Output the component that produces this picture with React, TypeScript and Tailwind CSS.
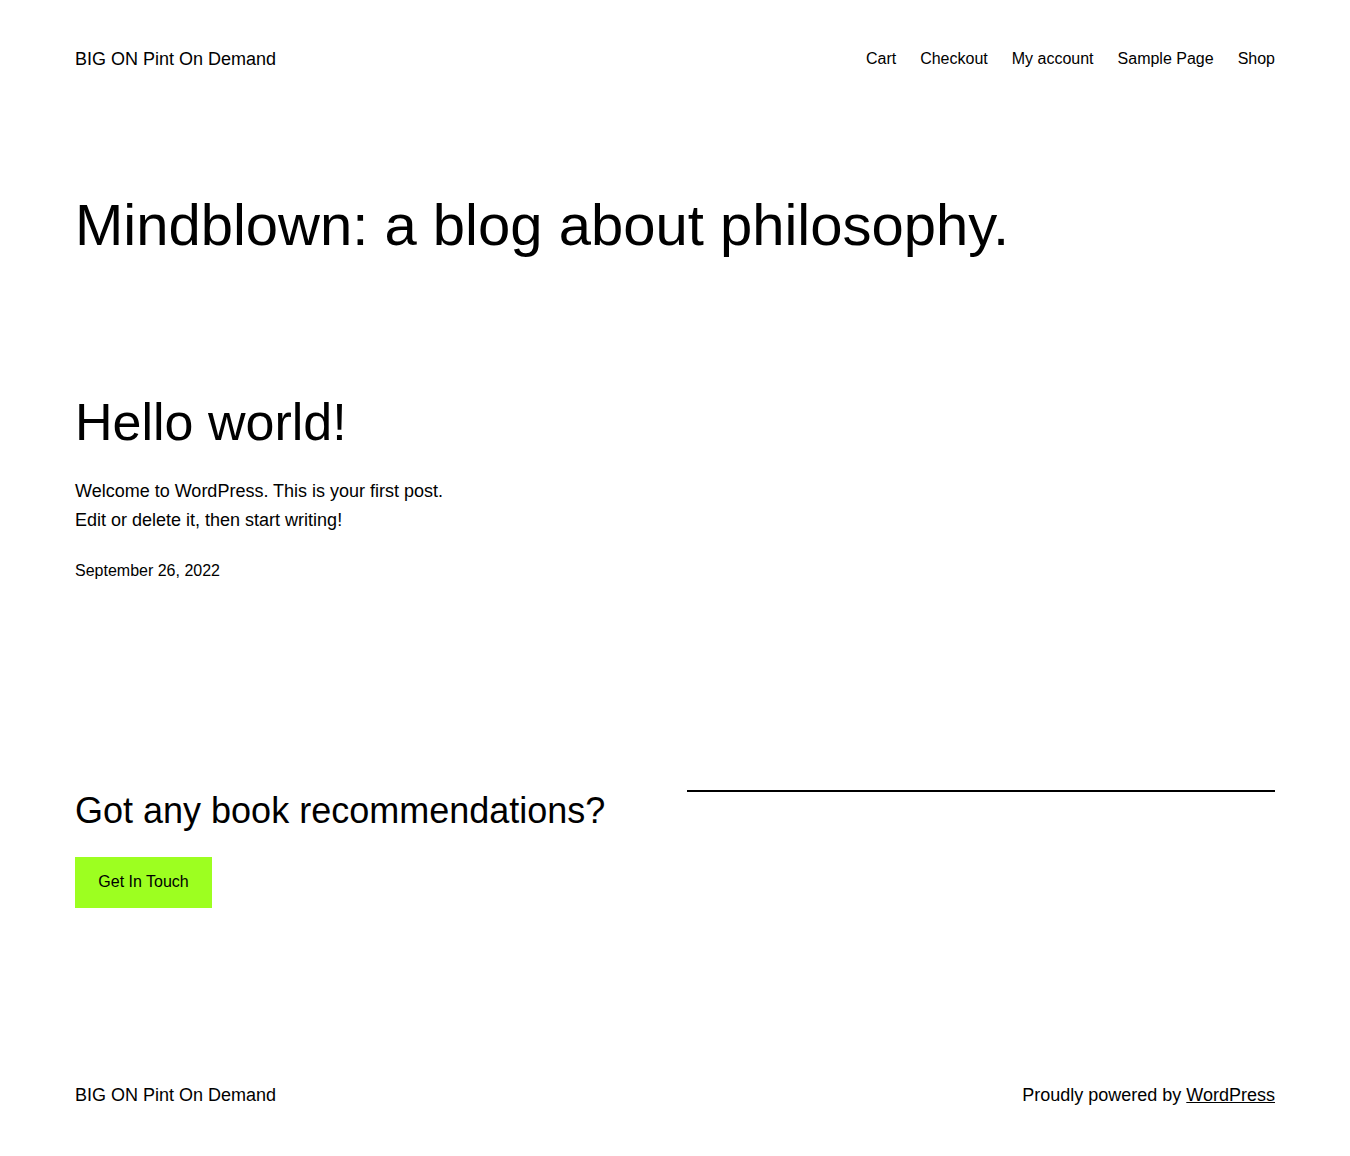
import React from 'react';

const navItems = ['Cart', 'Checkout', 'My account', 'Sample Page', 'Shop'];

const App: React.FC = () => {
  return (
    <div className="min-h-[1156px] bg-white text-black font-['Liberation_Sans',Arial,sans-serif]">
      <div className="mx-[75px]">
        {/* Header */}
        <header className="pt-[47px] flex items-center justify-between">
          <a href="#" className="text-[18px] leading-[24px]">BIG ON Pint On Demand</a>
          <nav className="flex items-center gap-6 text-[16px] leading-[24px]">
            {navItems.map(item => (
              <a key={item} href="#">{item}</a>
            ))}
          </nav>
        </header>

        {/* Page title */}
        <h1 className="mt-[125px] text-[58px] leading-none font-normal">
          Mindblown: a blog about philosophy.
        </h1>

        {/* Post */}
        <article className="mt-[142px]">
          <h2 className="text-[52px] leading-none font-normal">
            <a href="#">Hello world!</a>
          </h2>
          <div className="mt-[29px] text-[18px] leading-[29px]">
            <p>Welcome to WordPress. This is your first post.</p>
            <p>Edit or delete it, then start writing!</p>
          </div>
          <p className="mt-[23px] text-[16px] leading-[1.6]">September 26, 2022</p>
        </article>

        {/* Call to action */}
        <section className="mt-[205px] grid grid-cols-2 gap-6 items-start">
          <div>
            <h2 className="text-[36px] leading-[1.2] font-normal">Got any book recommendations?</h2>
            <a
              href="#"
              className="mt-[25px] inline-block bg-[#9dff20] px-[23.3px] py-[12.7px] text-[16px] leading-[1.6]"
            >
              Get In Touch
            </a>
          </div>
          <div className="pt-px">
            <hr className="border-0 h-[2px] bg-black" />
          </div>
        </section>

        {/* Footer */}
        <footer className="mt-[175px] pb-[50px] flex items-center justify-between text-[18px] leading-[24px]">
          <a href="#">BIG ON Pint On Demand</a>
          <p>
            Proudly powered by <a href="#" className="underline">WordPress</a>
          </p>
        </footer>
      </div>
    </div>
  );
};

export default App;
